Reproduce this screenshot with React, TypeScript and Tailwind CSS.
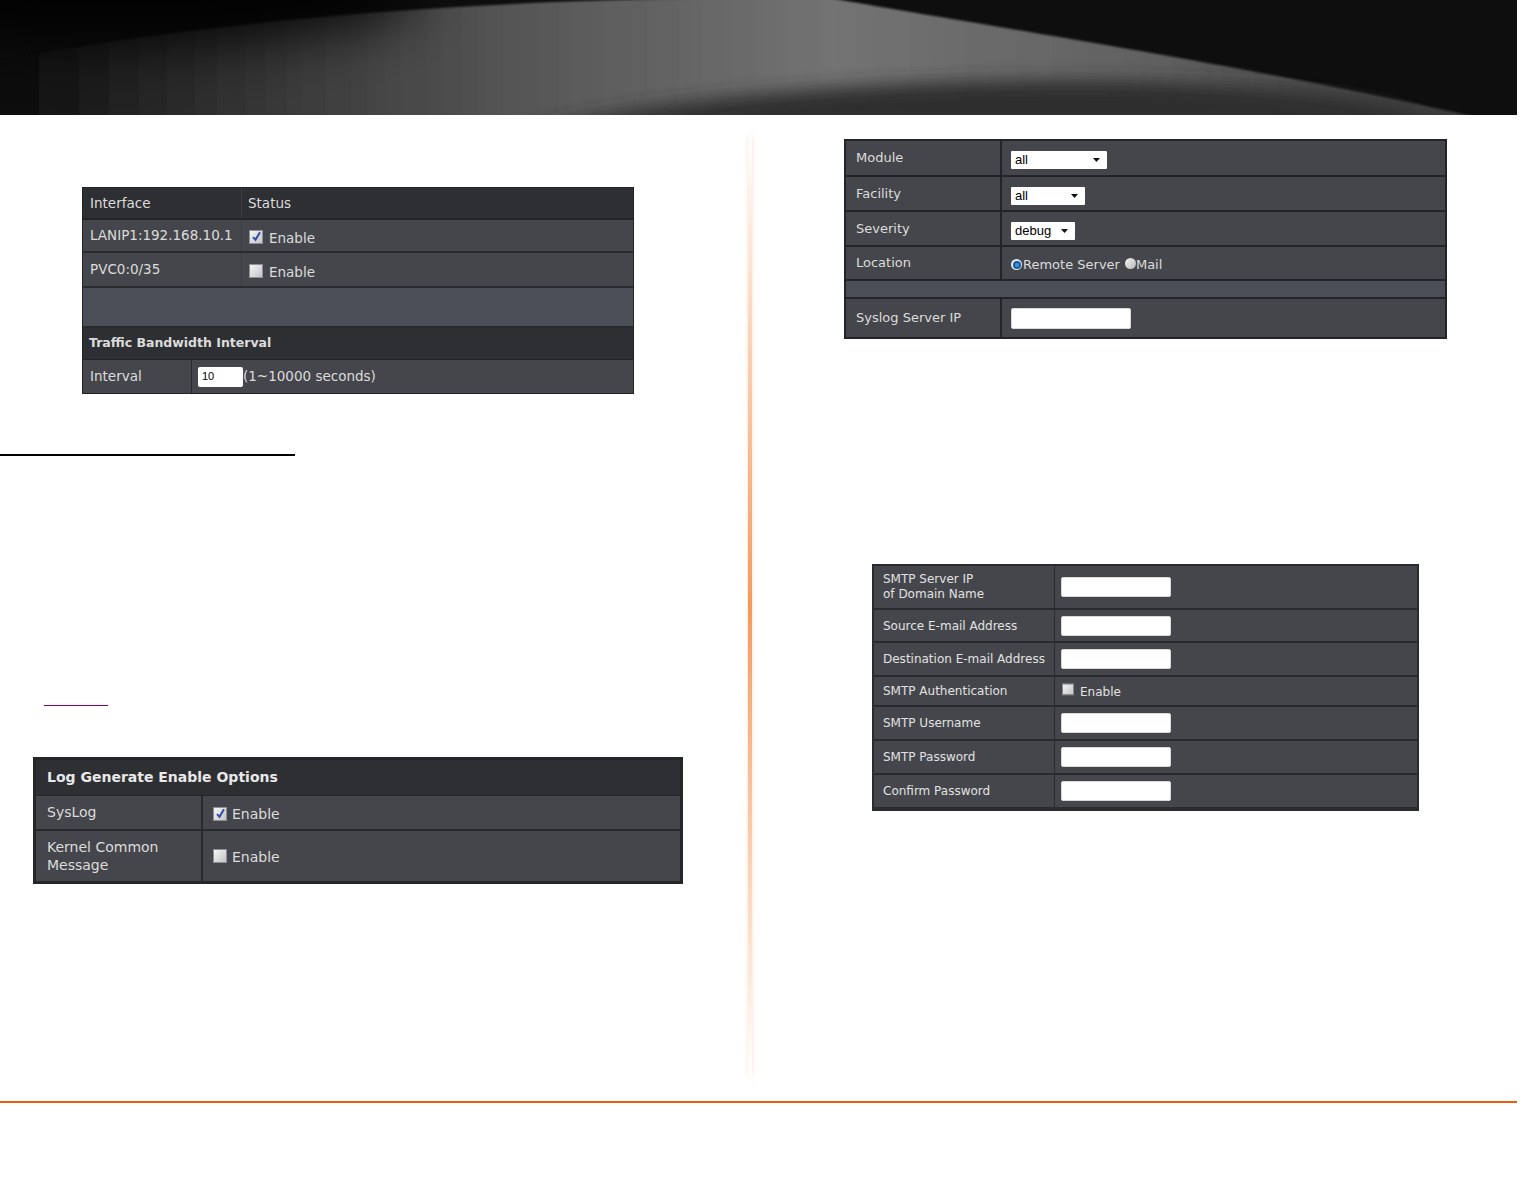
import React from 'react';

const sans = "font-['DejaVu_Sans',sans-serif]";

function Checkbox({ checked }: { checked?: boolean }) {
  return (
    <span className="inline-flex h-[14px] w-[14px] shrink-0 items-center justify-center border border-[#8e8e94] bg-gradient-to-br from-[#f6f6f8] to-[#c4c4c8]">
      {checked && (
        <svg viewBox="0 0 12 12" className="h-[11px] w-[11px]">
          <path d="M2.2 6.6 L4.9 9.6 L9.8 1.4" stroke="#2e4fa6" strokeWidth="2.2" fill="none" />
        </svg>
      )}
    </span>
  );
}

function Select({ value, className }: { value: string; className: string }) {
  return (
    <span className={`inline-flex h-[18px] items-center justify-between rounded-[1px] bg-white pl-[4px] pr-[7px] text-black ${className}`}>
      <span className="font-['Liberation_Sans',sans-serif] text-[13px]">{value}</span>
      <svg width="7" height="4" viewBox="0 0 7 4">
        <path d="M0 0h7L3.5 4z" fill="#111" />
      </svg>
    </span>
  );
}

function Radio({ checked }: { checked?: boolean }) {
  return checked ? (
    <span className="inline-flex h-[11px] w-[11px] items-center justify-center rounded-full bg-[#e4ebf2]">
      <span className="flex h-[8px] w-[8px] items-center justify-center rounded-full bg-[#1c5a98]">
        <span className="h-[4px] w-[4px] rounded-full bg-[#3d95dd]" />
      </span>
    </span>
  ) : (
    <span className="inline-block h-[11px] w-[11px] rounded-full bg-gradient-to-br from-[#f4f4f4] to-[#b8b8b8]" />
  );
}

function TextBox({ className }: { className: string }) {
  return <span className={`inline-block rounded-[2px] border border-[#d9d9d9] bg-white ${className}`} />;
}

function Banner() {
  return (
    <svg viewBox="0 0 1517 115" preserveAspectRatio="none" className="block h-[115px] w-[1517px]">
      <defs>
        <linearGradient id="arc" gradientUnits="userSpaceOnUse" x1="0" x2="1517" y1="0" y2="0">
          <stop offset="0" stopColor="#0a0a0a" />
          <stop offset="0.08" stopColor="#222" />
          <stop offset="0.2" stopColor="#3c3c3c" />
          <stop offset="0.35" stopColor="#575757" />
          <stop offset="0.55" stopColor="#737373" />
          <stop offset="0.75" stopColor="#626262" />
          <stop offset="1" stopColor="#333" />
        </linearGradient>
        <filter id="soft" x="-50%" y="-50%" width="200%" height="200%">
          <feGaussianBlur stdDeviation="9" />
        </filter>
        <filter id="haze" x="-50%" y="-100%" width="200%" height="300%">
          <feGaussianBlur stdDeviation="28" />
        </filter>
        <filter id="edge">
          <feGaussianBlur stdDeviation="1.2" />
        </filter>
      </defs>
      <rect width="1517" height="115" fill="#0e0e0e" />
      <path d="M -300 140 C -60 50 330 -6 830 -2 C 950 20 1250 65 1480 118 L 1480 140 Z" fill="url(#arc)" filter="url(#edge)" />
      <ellipse cx="120" cy="-10" rx="300" ry="55" fill="#000" opacity="0.85" filter="url(#haze)" />
      <path d="M 530 130 C 690 90 980 74 1180 83 C 1330 90 1410 104 1445 130 Z" fill="#2e2e2e" filter="url(#soft)" />
    </svg>
  );
}

export default function App() {
  return (
    <div className={`min-h-[1200px] w-[1539px] bg-white ${sans}`}>
      <Banner />

      <div className="flex h-[986px]">
        {/* left column */}
        <div className="flex w-[748px] shrink-0 flex-col">
          <div className="ml-[82px] mt-[72px] w-[552px] border border-[#222326] bg-[#45464b] text-[13.5px] text-[#dcdcdc]">
            <div className="flex h-[32px] border-b-2 border-[#242528] bg-[#2e2f33]">
              <div className="flex w-[159px] items-center border-r border-[#3c3d42] px-[7px]">Interface</div>
              <div className="flex items-center px-[6px]">Status</div>
            </div>
            <div className="flex h-[33px] border-b-2 border-[#2a2b2e]">
              <div className="flex w-[159px] items-center border-r border-[#3c3d42] px-[7px]">LANIP1:192.168.10.1</div>
              <div className="flex items-center gap-[6px] px-[7px] pt-[2px]">
                <Checkbox checked />
                <span className="mt-[4px]">Enable</span>
              </div>
            </div>
            <div className="flex h-[35px] border-b-2 border-[#2a2b2e]">
              <div className="flex w-[159px] items-center border-r border-[#3c3d42] px-[7px]">PVC0:0/35</div>
              <div className="flex items-center gap-[6px] px-[7px] pt-[2px]">
                <Checkbox />
                <span className="mt-[4px]">Enable</span>
              </div>
            </div>
            <div className="h-[40px] border-b-2 border-[#2a2b2e] bg-[#4b4e56]" />
            <div className="flex h-[32px] items-center border-b border-[#242528] bg-[#2e2f33] px-[6px] text-[12.5px] font-bold">
              Traffic Bandwidth Interval
            </div>
            <div className="flex h-[33px]">
              <div className="flex w-[109px] items-center border-r border-[#2a2b2e] px-[7px]">Interval</div>
              <div className="flex items-center px-[6px]">
                <span className="flex h-[20px] w-[45px] items-center rounded-[2px] bg-white px-[4px] font-['Liberation_Sans',sans-serif] text-[11px] text-black">10</span>
                <span>(1~10000 seconds)</span>
              </div>
            </div>
          </div>

          <div className="mt-[60px] h-[2px] w-[295px] bg-black" />
          <div className="ml-[44px] mt-[249px] h-[1px] w-[64px] bg-[#800080]" />

          <div className="ml-[33px] mt-[51px] w-[650px] border-[3px] border-[#25262a] bg-[#45464b] text-[14px] text-[#dcdcdc]">
            <div className="flex h-[36px] items-center border-b border-[#25262a] bg-[#2e2f33] px-[11px] font-bold text-[#e8e8e8]">
              Log Generate Enable Options
            </div>
            <div className="flex h-[35px] border-b-2 border-[#2a2b2e]">
              <div className="flex w-[167px] items-center border-r-2 border-[#2a2b2e] px-[11px]">SysLog</div>
              <div className="flex items-center gap-[5px] px-[10px] pt-[2px]">
                <Checkbox checked />
                <span className="mt-[2px]">Enable</span>
              </div>
            </div>
            <div className="flex h-[50px]">
              <div className="flex w-[167px] items-center border-r-2 border-[#2a2b2e] px-[11px] leading-[18px]">
                Kernel Common
                <br />
                Message
              </div>
              <div className="flex items-center gap-[5px] px-[10px]">
                <Checkbox />
                <span className="mt-[2px]">Enable</span>
              </div>
            </div>
          </div>
        </div>

        {/* divider */}
        <div className="mb-[25px] mt-[20px] w-[4px] shrink-0 bg-gradient-to-b from-transparent via-[#f39a5e] to-transparent shadow-[0_0_4px_#fde2cc]" />

        {/* right column */}
        <div className="flex flex-1 flex-col">
          <div className="ml-[92px] mt-[24px] w-[603px] border-2 border-[#232427] bg-[#45464b] text-[13px] text-[#dcdcdc]">
            <div className="flex h-[36px] border-b-2 border-[#232427]">
              <div className="flex w-[156px] items-center border-r-2 border-[#232427] px-[10px]">Module</div>
              <div className="flex items-center px-[9px] pt-[4px]">
                <Select value="all" className="w-[96px]" />
              </div>
            </div>
            <div className="flex h-[35px] border-b-2 border-[#232427]">
              <div className="flex w-[156px] items-center border-r-2 border-[#232427] px-[10px]">Facility</div>
              <div className="flex items-center px-[9px] pt-[4px]">
                <Select value="all" className="w-[74px]" />
              </div>
            </div>
            <div className="flex h-[35px] border-b-2 border-[#232427]">
              <div className="flex w-[156px] items-center border-r-2 border-[#232427] px-[10px]">Severity</div>
              <div className="flex items-center px-[9px] pt-[4px]">
                <Select value="debug" className="w-[64px]" />
              </div>
            </div>
            <div className="flex h-[34px] border-b-2 border-[#232427]">
              <div className="flex w-[156px] items-center border-r-2 border-[#232427] px-[10px]">Location</div>
              <div className="flex items-center px-[9px] pt-[3px] text-[13px]">
                <Radio checked />
                <span className="ml-[1px]">Remote Server</span>
                <span className="ml-[5px]">
                  <Radio />
                </span>
                <span>Mail</span>
              </div>
            </div>
            <div className="h-[18px] border-b-2 border-[#232427] bg-[#4b4e56]" />
            <div className="flex h-[38px]">
              <div className="flex w-[156px] items-center border-r-2 border-[#232427] px-[10px]">Syslog Server IP</div>
              <div className="flex items-center px-[9px]">
                <TextBox className="h-[21px] w-[120px]" />
              </div>
            </div>
          </div>

          <div className="ml-[120px] mt-[225px] w-[547px] border-x-2 border-b-4 border-t-2 border-[#2a2b2e] bg-[#45464b] text-[12px] text-[#e2e2e2]">
            <div className="flex h-[44px] border-b-2 border-[#2a2b2e]">
              <div className="flex w-[181px] flex-col justify-center border-r border-[#2a2b2e] px-[9px] leading-[15px]">
                <span>SMTP Server IP</span>
                <span>of Domain Name</span>
              </div>
              <div className="flex items-center px-[6px]">
                <TextBox className="h-[20px] w-[110px]" />
              </div>
            </div>
            {[
              { label: 'Source E-mail Address', h: 'h-[33px]' },
              { label: 'Destination E-mail Address', h: 'h-[34px]' },
            ].map((r) => (
              <div key={r.label} className={`flex ${r.h} border-b-2 border-[#2a2b2e]`}>
                <div className="flex w-[181px] items-center border-r border-[#2a2b2e] px-[9px]">{r.label}</div>
                <div className="flex items-center px-[6px]">
                  <TextBox className="h-[20px] w-[110px]" />
                </div>
              </div>
            ))}
            <div className="flex h-[30px] border-b-2 border-[#2a2b2e]">
              <div className="flex w-[181px] items-center border-r border-[#2a2b2e] px-[9px]">SMTP Authentication</div>
              <div className="flex items-center gap-[5px] px-[6px]">
                <span className="scale-[0.85]">
                  <Checkbox />
                </span>
                <span className="mt-[2px]">Enable</span>
              </div>
            </div>
            {[
              { label: 'SMTP Username', h: 'h-[34px]', b: 'border-b-2' },
              { label: 'SMTP Password', h: 'h-[34px]', b: 'border-b-2' },
              { label: 'Confirm Password', h: 'h-[32px]', b: '' },
            ].map((r) => (
              <div key={r.label} className={`flex ${r.h} ${r.b} border-[#2a2b2e]`}>
                <div className="flex w-[181px] items-center border-r border-[#2a2b2e] px-[9px]">{r.label}</div>
                <div className="flex items-center px-[6px]">
                  <TextBox className="h-[20px] w-[110px]" />
                </div>
              </div>
            ))}
          </div>
        </div>
      </div>

      <div className="h-[2px] w-[1517px] bg-[#f15a0b]" />
    </div>
  );
}
